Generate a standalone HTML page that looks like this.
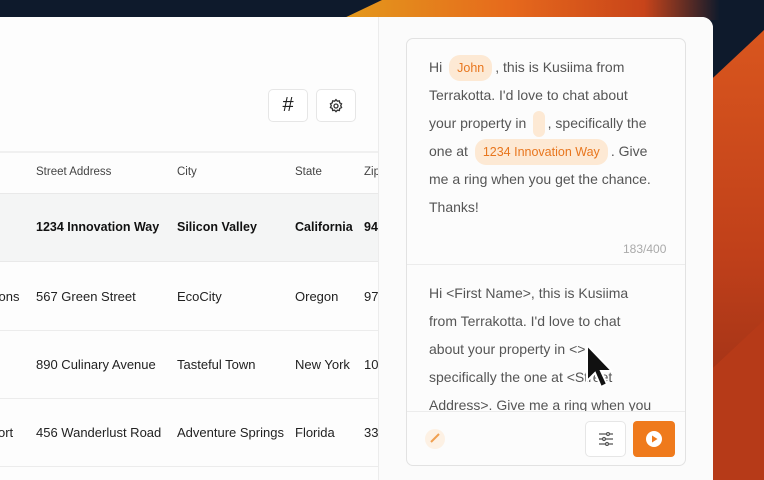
<!DOCTYPE html>
<html><head><style>
*{margin:0;padding:0;box-sizing:border-box}
body{width:764px;height:480px;overflow:hidden;position:relative;font-family:"Liberation Sans",sans-serif;background:#0e1a2c}
.panel{position:absolute;left:0;top:17px;width:713px;height:463px;background:#fdfdfd;border-top-right-radius:11px}
.right{position:absolute;left:378px;top:17px;width:335px;height:463px;background:#fbfbfb;border-left:1px solid #ececec;border-top-right-radius:11px}
.t{position:absolute;font-size:13px;color:#222;white-space:nowrap}
.h{font-size:11.5px;color:#444}
.b{font-weight:bold;font-size:12.5px;color:#111}
.line{position:absolute;left:0;width:378px;height:1px;background:#ececec}
.btn{position:absolute;border:1px solid #e6e6e6;border-radius:5px;background:#fff;display:flex;align-items:center;justify-content:center}
.card{position:absolute;left:406px;top:38px;width:280px;height:428px;border:1px solid #e2e2e2;border-radius:7px;background:#fcfcfc}
.p{position:absolute;left:22px;font-size:14px;color:#555;white-space:nowrap}
.tag{display:inline-block;background:#fde9d4;color:#e8761e;border-radius:11px;padding:0 8px;font-size:12.5px;line-height:26px;margin:-4px 3px 0}
</style></head><body>
<svg style="position:absolute;left:0;top:0" width="764" height="480" viewBox="0 0 764 480">
<defs><linearGradient id="g1" x1="0" y1="0" x2="1" y2="0"><stop offset="0" stop-color="#e39a1c"/><stop offset=".45" stop-color="#e6691c"/><stop offset=".8" stop-color="#c8441a"/><stop offset="1" stop-color="#0e1a2c"/></linearGradient>
<linearGradient id="g2" x1="0" y1="0" x2="0" y2="1"><stop offset="0" stop-color="#d9561e"/><stop offset=".5" stop-color="#c0401a"/><stop offset="1" stop-color="#8e2a15"/></linearGradient></defs>
<polygon points="382,0 720,0 720,20 340,20" fill="url(#g1)"/>
<polygon points="700,90 764,30 764,480 700,480" fill="url(#g2)"/>
<polygon points="700,380 764,320 764,480 700,480" fill="#b63a18"/>
</svg>
<div class="panel"></div>
<div class="btn" style="left:268px;top:89px;width:40px;height:33px;font-size:20px;color:#222">#</div>
<div class="btn" style="left:316px;top:89px;width:40px;height:33px">
<svg width="16" height="16" viewBox="0 0 24 24" fill="none" stroke="#333" stroke-width="2"><circle cx="12" cy="12" r="3"/><path d="M12 2.5l2 2.2 3-.4.6 3 2.7 1.4-1.2 2.8 1.2 2.8-2.7 1.4-.6 3-3-.4-2 2.2-2-2.2-3 .4-.6-3-2.7-1.4 1.2-2.8-1.2-2.8 2.7-1.4.6-3 3 .4z"/></svg></div>
<div class="line" style="top:151px;background:#f0f0f0;height:2px"></div>
<div style="position:absolute;left:0;top:193px;width:378px;height:69px;background:#f4f5f5;border-top:1px solid #e9e9e9;border-bottom:1px solid #e9e9e9"></div>
<div class="t h" style="left:36px;top:166px">Street Address</div>
<div class="t h" style="left:177px;top:166px">City</div>
<div class="t h" style="left:295px;top:166px">State</div>
<div class="t h" style="left:364px;top:166px">Zip</div>
<div class="t b" style="left:36px;top:220px">1234 Innovation Way</div>
<div class="t b" style="left:177px;top:220px">Silicon Valley</div>
<div class="t b" style="left:295px;top:220px">California</div>
<div class="t b" style="left:364px;top:220px">94</div>
<div class="t" style="left:-8px;top:289px">tions</div>
<div class="t" style="left:36px;top:289px">567 Green Street</div>
<div class="t" style="left:177px;top:289px">EcoCity</div>
<div class="t" style="left:295px;top:289px">Oregon</div>
<div class="t" style="left:364px;top:289px">97</div>
<div class="line" style="top:330px"></div>
<div class="t" style="left:36px;top:357px">890 Culinary Avenue</div>
<div class="t" style="left:177px;top:357px">Tasteful Town</div>
<div class="t" style="left:295px;top:357px">New York</div>
<div class="t" style="left:364px;top:357px">10</div>
<div class="line" style="top:398px"></div>
<div class="t" style="left:-2px;top:425px">ort</div>
<div class="t" style="left:36px;top:425px">456 Wanderlust Road</div>
<div class="t" style="left:177px;top:425px">Adventure Springs</div>
<div class="t" style="left:295px;top:425px">Florida</div>
<div class="t" style="left:364px;top:425px">33</div>
<div class="line" style="top:466px"></div>
<div class="right"></div>
<div class="card">
<div class="p" style="top:20px">Hi <span class="tag">John</span>, this is Kusiima from</div>
<div class="p" style="top:48px">Terrakotta. I'd love to chat about</div>
<div class="p" style="top:76px">your property in <span class="tag" style="padding:0 4px">&nbsp;</span>, specifically the</div>
<div class="p" style="top:104px">one at <span class="tag">1234 Innovation Way</span>. Give</div>
<div class="p" style="top:132px">me a ring when you get the chance.</div>
<div class="p" style="top:160px">Thanks!</div>
<div class="p" style="top:203px;left:216px;font-size:12px;color:#aaa">183/400</div>
<div style="position:absolute;left:0;top:225px;width:278px;height:1px;background:#ececec"></div>
<div style="position:absolute;left:0;top:226px;width:278px;height:146px;overflow:hidden">
<div class="p" style="top:20px">Hi &lt;First Name&gt;, this is Kusiima</div>
<div class="p" style="top:48px">from Terrakotta. I'd love to chat</div>
<div class="p" style="top:76px">about your property in &lt;&gt;,</div>
<div class="p" style="top:104px">specifically the one at &lt;Street</div>
<div class="p" style="top:132px">Address&gt;. Give me a ring when you</div>
</div>
<div style="position:absolute;left:0;top:372px;width:278px;height:1px;background:#ececec"></div>
<div style="position:absolute;left:18px;top:390px;width:20px;height:20px;border-radius:50%;background:#fdf1e4"></div>
<svg style="position:absolute;left:22px;top:393px" width="12" height="12" viewBox="0 0 12 12"><path d="M2 10L10 2" stroke="#f0a050" stroke-width="2"/></svg>
<div class="btn" style="left:178px;top:382px;width:41px;height:36px">
<svg width="16" height="14" viewBox="0 0 16 14" stroke="#555" stroke-width="1.2"><path d="M1 2h14M1 7h14M1 12h14"/><circle cx="10" cy="2" r="1.5" fill="#fff"/><circle cx="6" cy="7" r="1.5" fill="#fff"/><circle cx="9" cy="12" r="1.5" fill="#fff"/></svg></div>
<div style="position:absolute;left:226px;top:382px;width:42px;height:36px;background:#ef7a1c;border-radius:4px;display:flex;align-items:center;justify-content:center">
<svg width="18" height="18" viewBox="0 0 18 18"><circle cx="9" cy="9" r="8" fill="#fff"/><path d="M7 5.5v7l5.5-3.5z" fill="#ef7a1c"/></svg></div>
</div>
<svg style="position:absolute;left:585px;top:343px" width="28" height="52" viewBox="0 0 28 52"><path d="M2 2v36l8-8 6 14 6-3-6-13h11z" fill="#111" stroke="#fff" stroke-width="2"/></svg>
</body></html>
